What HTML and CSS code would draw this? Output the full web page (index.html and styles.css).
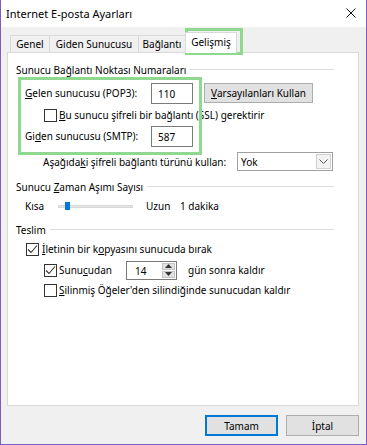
FILE: index.html
```html
<!DOCTYPE html>
<html>
<head>
    <title>Internet E-posta Ayarları</title>
    <link rel="stylesheet" href="styles.css">
</head>
<body>
    <div class="window">
        <div class="titlebar">
            <span class="title">Internet E-posta Ayarları</span>
            <svg class="close" width="10" height="10" viewBox="0 0 10 10">
                <path d="M0.5 0.5 L9.5 9.5 M9.5 0.5 L0.5 9.5" stroke="#111" stroke-width="1" fill="none"/>
            </svg>
        </div>

        <div class="frame">
            <div class="tabs">
                <div class="tab tab-genel">Genel</div>
                <div class="tab tab-giden">Giden Sunucusu</div>
                <div class="tab tab-baglanti">Bağlantı</div>
                <div class="tab tab-active">Gelişmiş</div>
            </div>

            <div class="panel">
                <div class="group-title"><span>Sunucu Bağlantı Noktası Numaraları</span><i class="rule"></i></div>

                <div class="row row-port">
                    <span class="port-label"><u>G</u>elen sunucusu (POP3):</span>
                    <div class="field field-port">110</div>
                    <div class="btn btn-defaults"><u>V</u>arsayılanları Kullan</div>
                </div>

                <div class="row row-check row-ssl">
                    <span class="check"></span>
                    <span><u>B</u>u sunucu şifreli bir bağlantı (SSL) gerektirir</span>
                </div>

                <div class="row row-port row-smtp">
                    <span class="port-label">Gi<u>d</u>en sunucusu (SMTP):</span>
                    <div class="field field-port">587</div>
                </div>

                <div class="row row-enc">
                    <span class="enc-label">Aşağıda<u>k</u>i şifreli bağlantı türünü kullan:</span>
                    <div class="select">
                        <span class="select-value">Yok</span>
                        <span class="select-arrow">
                            <svg width="9" height="5" viewBox="0 0 9 5"><path d="M0.5 0.5 L4.5 4.5 L8.5 0.5" stroke="#555" fill="none"/></svg>
                        </span>
                    </div>
                </div>

                <div class="group-title group-timeout"><span>Sunucu <u>Z</u>aman Aşımı Sayısı</span><i class="rule"></i></div>

                <div class="row row-slider">
                    <span class="slider-min">Kısa</span>
                    <div class="slider">
                        <div class="slider-track"></div>
                        <div class="slider-thumb"></div>
                    </div>
                    <span class="slider-max">Uzun</span>
                    <span>1 dakika</span>
                </div>

                <div class="group-title group-delivery"><span>Teslim</span><i class="rule"></i></div>

                <div class="row row-check row-keep">
                    <span class="check checked">
                        <svg width="11" height="11" viewBox="0 0 11 11"><path d="M1 5.5 L4 8.5 L10 1.5" stroke="#333" stroke-width="1.1" fill="none"/></svg>
                    </span>
                    <span><u>İ</u>letinin bir k<u>o</u>pyasını sunucuda bırak</span>
                </div>

                <div class="row row-check row-remove">
                    <span class="check checked">
                        <svg width="11" height="11" viewBox="0 0 11 11"><path d="M1 5.5 L4 8.5 L10 1.5" stroke="#333" stroke-width="1.1" fill="none"/></svg>
                    </span>
                    <span class="remove-label">Sunu<u>c</u>udan</span>
                    <div class="spinner">
                        <span class="spinner-value">14</span>
                        <span class="spinner-buttons">
                            <span class="spin-btn"><svg width="7" height="4" viewBox="0 0 7 4"><path d="M0 4 L3.5 0 L7 4 Z" fill="#333"/></svg></span>
                            <span class="spin-btn"><svg width="7" height="4" viewBox="0 0 7 4"><path d="M0 0 L3.5 4 L7 0 Z" fill="#333"/></svg></span>
                        </span>
                    </div>
                    <span class="days-label">gün sonra kaldır</span>
                </div>

                <div class="row row-check row-deleted">
                    <span class="check"></span>
                    <span><u>S</u>ilinmiş Öğeler'den silindiğinde sunucudan kaldır</span>
                </div>
            </div>

            <div class="actions">
                <div class="btn btn-action btn-primary">Tamam</div>
                <div class="btn btn-action">İptal</div>
            </div>
        </div>

        <!-- annotation highlights drawn over the dialog -->
        <div class="mark mark-tab"></div>
        <div class="mark mark-ports"></div>
    </div>
</body>
</html>
```

FILE: styles.css
```css
body {
    margin: 0;
    background-color: #f0f0f0;
    font-family: "Noto Sans", "Open Sans", sans-serif;
    font-size: 10px;
    color: #000;
}
u {
    text-decoration: underline;
    text-underline-offset: 1px;
}
.window {
    position: relative;
    width: 367px;
    height: 445px;
    box-sizing: border-box;
    border: 1px solid #7f5dbf;
    border-top: none;
    background-color: #f0f0f0;
    white-space: nowrap;
}
.titlebar {
    height: 27px;
    background-color: #fff;
    display: flex;
    align-items: center;
    justify-content: space-between;
    padding: 0 10px 0 5px;
}
.title {
    font-size: 11px;
}
.close {
    margin-top: -1px;
}
.frame {
    padding: 5px 7px 0 6px;
}
.tabs {
    display: flex;
    align-items: flex-end;
    height: 20px;
    padding-left: 3px;
    position: relative;
    z-index: 1;
}
.tab {
    height: 17px;
    box-sizing: border-box;
    border: 1px solid #d9d9d9;
    border-bottom: none;
    border-left: none;
    background-color: #f0f0f0;
    display: flex;
    align-items: center;
    justify-content: center;
}
.tab-genel {
    width: 40px;
    border-left: 1px solid #d9d9d9;
}
.tab-giden {
    width: 89px;
}
.tab-baglanti {
    width: 47px;
}
.tab-active {
    width: 52px;
    height: 21px;
    margin-left: -1px;
    margin-bottom: -1px;
    border-left: 1px solid #d9d9d9;
    background-color: #fff;
    padding-bottom: 2px;
}
.panel {
    height: 354px;
    box-sizing: border-box;
    border: 1px solid #d9d9d9;
    background-color: #fff;
    padding: 9px 24px 0 8px;
}
.group-title {
    display: flex;
    align-items: center;
    height: 15px;
}
.rule {
    flex: 1;
    height: 1px;
    margin-left: 4px;
    background-color: #dcdcdc;
}
.row {
    display: flex;
    align-items: center;
}
.row-port {
    height: 21px;
    margin-top: 6px;
    padding-left: 9px;
    align-items: flex-start;
}
.row-port .port-label {
    width: 126px;
    line-height: 21px;
}
.field {
    box-sizing: border-box;
    border: 1px solid #7a7a7a;
    background-color: #fff;
    display: flex;
    align-items: center;
}
.field-port {
    width: 42px;
    height: 21px;
    padding-left: 6px;
}
.btn {
    box-sizing: border-box;
    border: 1px solid #adadad;
    background-color: #e1e1e1;
    display: flex;
    align-items: center;
    justify-content: center;
}
.btn-defaults {
    width: 109px;
    height: 20px;
    margin-left: 11px;
}
.row-check {
    height: 14px;
}
.check {
    width: 13px;
    height: 13px;
    box-sizing: border-box;
    border: 1px solid #333;
    background-color: #fff;
    margin-right: 2px;
    display: flex;
    align-items: center;
    justify-content: center;
}
.row-ssl {
    margin-top: 4px;
    padding-left: 28px;
}
.row-smtp {
    margin-top: 4px;
}
.row-enc {
    height: 19px;
    margin-top: 5px;
    padding-left: 27px;
}
.enc-label {
    width: 194px;
}
.select {
    width: 96px;
    height: 19px;
    box-sizing: border-box;
    border: 1px solid #a0a0a0;
    background-color: #fff;
    display: flex;
    align-items: center;
    justify-content: space-between;
    padding: 0 1px 0 3px;
}
.select-arrow {
    width: 15px;
    height: 15px;
    box-sizing: border-box;
    border: 1px solid #cfcfcf;
    background-color: #f3f3f3;
    display: flex;
    align-items: center;
    justify-content: center;
}
.group-timeout {
    margin-top: 8px;
}
.row-slider {
    height: 14px;
    margin-top: 5px;
    padding-left: 9px;
}
.slider-min {
    width: 33px;
}
.slider {
    position: relative;
    width: 75px;
    height: 8px;
    display: flex;
    align-items: center;
}
.slider-track {
    width: 100%;
    height: 3px;
    box-sizing: border-box;
    border: 1px solid #d6d6d6;
    background-color: #e7e7e7;
}
.slider-thumb {
    position: absolute;
    left: 7px;
    top: 0;
    width: 5px;
    height: 8px;
    background-color: #0078d7;
}
.slider-max {
    width: 34px;
    margin-left: 13px;
}
.group-delivery {
    margin-top: 9px;
}
.row-keep {
    margin-top: 5px;
    padding-left: 10px;
}
.row-keep .check {
    margin-right: 3px;
}
.row-remove {
    height: 20px;
    margin-top: 4px;
    padding-left: 28px;
}
.remove-label {
    width: 67px;
}
.spinner {
    width: 51px;
    height: 19px;
    box-sizing: border-box;
    border: 1px solid #7a7a7a;
    display: flex;
    justify-content: space-between;
}
.spinner-value {
    padding-left: 8px;
    line-height: 19px;
}
.spinner-buttons {
    width: 13px;
    display: flex;
    flex-direction: column;
    gap: 1px;
    padding: 1px;
}
.spin-btn {
    flex: 1;
    background-color: #e1e1e1;
    border: 1px solid #c4c4c4;
    display: flex;
    align-items: center;
    justify-content: center;
}
.days-label {
    margin-left: 11px;
}
.row-deleted {
    margin-top: 3px;
    padding-left: 28px;
}
.actions {
    display: flex;
    justify-content: flex-end;
    gap: 8px;
    margin-top: 9px;
}
.btn-action {
    width: 73px;
    height: 21px;
}
.btn-primary {
    border: 2px solid #0078d7;
}
.mark {
    position: absolute;
    box-sizing: border-box;
    border: 3px solid #8fd88f;
    pointer-events: none;
}
.mark-tab {
    left: 184px;
    top: 28px;
    width: 58px;
    height: 27px;
}
.mark-ports {
    left: 17px;
    top: 77px;
    width: 184px;
    height: 78px;
}
```
